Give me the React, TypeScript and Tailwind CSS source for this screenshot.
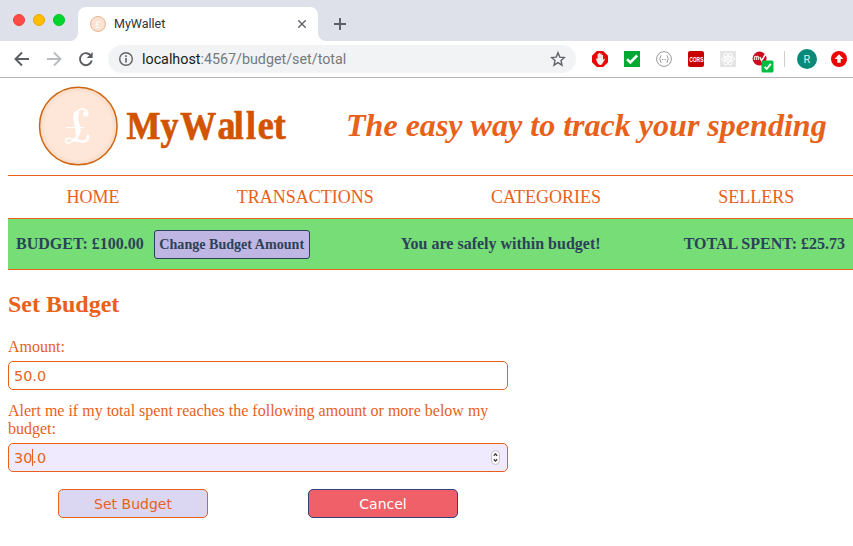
import type { ReactNode } from "react";

const NAV = ["HOME", "TRANSACTIONS", "CATEGORIES", "SELLERS"];

function Dot({ className }: { className: string }) {
  return <span className={`size-3 rounded-full border ${className}`} />;
}

function Icon({ children, className = "" }: { children: ReactNode; className?: string }) {
  return (
    <svg viewBox="0 0 16 16" className={`size-4 shrink-0 ${className}`} fill="none">
      {children}
    </svg>
  );
}

function TabStrip() {
  return (
    <div className="flex h-[41px] bg-[#dee1e9]">
      <div className="flex w-[78px] gap-2 rounded-br-lg pt-[14px] pl-[13px]">
        <Dot className="border-[#e9423a] bg-[#ff4b47]" />
        <Dot className="border-[#eeaa00] bg-[#ffbd04]" />
        <Dot className="border-[#00c222] bg-[#00d52c]" />
      </div>
      <div className="relative mt-[7px] flex h-[34px] w-[240px] items-center rounded-t-lg bg-white pr-3 pl-3">
        <svg viewBox="0 0 8 8" className="absolute bottom-0 -left-2 size-2">
          <path d="M8 0V8H0A8 8 0 0 0 8 0Z" fill="#fff" />
        </svg>
        <svg viewBox="0 0 8 8" className="absolute -right-2 bottom-0 size-2">
          <path d="M0 0V8H8A8 8 0 0 1 0 0Z" fill="#fff" />
        </svg>
        <span className="flex size-4 items-center justify-center rounded-full border border-[#e9b48b] bg-[#fbe3d4] font-['Liberation_Serif',serif] text-[11px] leading-none text-white">
          £
        </span>
        <span className="ml-2 flex-1 text-[12.5px] leading-4 text-[#303236]">MyWallet</span>
        <svg viewBox="0 0 8 8" className="size-2" fill="none" stroke="#5f6368" strokeWidth="1.4">
          <path d="M.3 .3 7.7 7.7M7.7 .3 .3 7.7" />
        </svg>
      </div>
      <svg viewBox="0 0 12 12" className="mt-[18px] ml-4 size-3" fill="none" stroke="#5a5d63" strokeWidth="1.9">
        <path d="M6 0V12M0 6H12" />
      </svg>
    </div>
  );
}

function Toolbar() {
  return (
    <div className="flex h-[37px] items-center border-b border-[#b5b5b5] bg-white pl-[14px]">
      <Icon>
        <path d="M15 8H2M8 1.5 1.5 8 8 14.5" stroke="#5a5d62" strokeWidth="1.9" />
      </Icon>
      <Icon className="ml-4">
        <path d="M1 8H14M8 1.5 14.5 8 8 14.5" stroke="#b9bbbe" strokeWidth="1.9" />
      </Icon>
      <Icon className="ml-4">
        <path d="M13.2 5.2A6 6 0 1 0 13.8 9.6" stroke="#5a5d62" strokeWidth="1.9" />
        <path d="M14.7 1V7H8.7Z" fill="#5a5d62" />
      </Icon>
      <div className="ml-[14px] flex h-7 w-[468px] items-center rounded-full bg-[#f1f3f4] pr-[10px] pl-[10px]">
        <Icon>
          <circle cx="8" cy="8" r="6.3" stroke="#5f6368" strokeWidth="1.4" />
          <path d="M8 7V11.5M8 4.3V6" stroke="#5f6368" strokeWidth="1.6" />
        </Icon>
        <span className="ml-2 flex-1 text-[14.3px] leading-5 text-[#18191b]">
          localhost<span className="text-[#757a7f]">:4567/budget/set/total</span>
        </span>
        <Icon>
          <path
            d="M8 1.7 9.8 6.1 14.5 6.5 11 9.6 12 14.2 8 11.7 4 14.2 5 9.6 1.5 6.5 6.2 6.1Z"
            stroke="#5f6368"
            strokeWidth="1.4"
          />
        </Icon>
      </div>
      <Icon className="ml-4">
        <path d="M4.8 0H11.2L16 4.8V11.2L11.2 16H4.8L0 11.2V4.8Z" fill="#e80808" />
        <path
          d="M4 8 5 7.2 5.6 8.3V3.2Q6.2 2.4 6.8 3.2V2.3Q7.5 1.4 8.2 2.3V3Q9 2.2 9.6 3V4Q10.4 3.4 11 4.3V9L12 7.7 13 8.3 10.4 12.5Q9.8 14 8.2 14 6.3 14 5.2 11.6Z"
          fill="#f4eeee"
        />
        <path d="M6.8 3.5V7M8.2 3V7M9.6 3.8V7" stroke="#d9b8b8" strokeWidth=".4" />
      </Icon>
      <Icon className="ml-4">
        <path d="M0 0H16V16H0Z" fill="#00aa32" />
        <path d="M3 8.2 6.3 11.5 13.2 4.5" stroke="#fff" strokeWidth="2.5" />
      </Icon>
      <Icon className="ml-4">
        <circle cx="8" cy="8" r="7.4" stroke="#999" />
        <path
          d="M5.5 4.6Q4.3 4.6 4.5 6T3.3 8Q4.7 8.2 4.5 10T5.5 11.4M10.5 4.6Q11.7 4.6 11.5 6T12.7 8Q11.3 8.2 11.5 10T10.5 11.4M6 8.5H7M7.6 8.5H8.5M9.2 8.5H10"
          stroke="#999"
          strokeWidth=".9"
        />
      </Icon>
      <Icon className="ml-4">
        <rect width="16" height="16" rx="2" fill="#c80000" />
        <text
          transform="translate(1.2 10.8) scale(.62 1)"
          fill="#fff"
          className="font-['Liberation_Sans',sans-serif] text-[8px] font-bold"
        >
          CORS
        </text>
      </Icon>
      <Icon className="ml-4">
        <path d="M0 0H16V16H0Z" fill="#e5e5e5" />
        <g stroke="#fff" strokeWidth=".9">
          <ellipse cx="8" cy="8" rx="6.5" ry="2.6" />
          <ellipse cx="8" cy="8" rx="6.5" ry="2.6" transform="rotate(60 8 8)" />
          <ellipse cx="8" cy="8" rx="6.5" ry="2.6" transform="rotate(120 8 8)" />
        </g>
        <circle cx="8" cy="8" r="1.4" fill="#fff" />
      </Icon>
      <svg viewBox="0 0 22 22" className="mt-[6px] ml-4 size-[22px] shrink-0" fill="none">
        <circle cx="7.6" cy="7.6" r="7" fill="#cf0a20" />
        <path d="M2.5 9V5.8Q4 4.6 4.4 6V9M4.4 6.2Q6 4.6 6.4 6V9" stroke="#f5d5d8" strokeWidth="1.2" />
        <path d="M7.8 6.2 9.6 9.6 13.6 3" stroke="#fff" strokeWidth="1.5" />
        <rect x="9.5" y="9.5" width="12" height="12" rx="1.5" fill="#00bd42" />
        <path d="M12.5 15.8 14.7 18 18.8 12.9" stroke="#fff" strokeWidth="1.8" />
      </svg>
      <span className="ml-[10px] h-4 w-px bg-[#cfcfcf]" />
      <span className="ml-3 flex size-5 items-center justify-center rounded-full bg-[#078b78] text-[11px] leading-none text-[#d9f0ec]">
        R
      </span>
      <Icon className="ml-[14px]">
        <circle cx="8" cy="8" r="8" fill="#ee0303" />
        <path d="M8 3.2 12.4 8H9.7V11.8H6.3V8H3.6Z" fill="#fff" />
      </Icon>
    </div>
  );
}

function Logo() {
  return (
    <svg viewBox="0 0 256 82" className="h-[82px] w-[256px]" role="img" aria-label="MyWallet">
      <defs>
        <radialGradient id="coin">
          <stop offset="0.86" stopColor="#fee6d8" />
          <stop offset="1" stopColor="#f8d9c6" />
        </radialGradient>
      </defs>
      <circle cx="40.3" cy="41" r="38.8" fill="url(#coin)" stroke="#cf650f" strokeWidth="1.5" />
      <g fill="none" stroke="#fff" strokeLinecap="round">
        <path d="M49.5 28C48 22.5 39.5 22.5 37.5 30" strokeWidth="1.7" />
        <path d="M38.5 28.5C35.5 35 41.5 42 39.8 48" strokeWidth="5" />
        <path d="M40.5 48C39.5 52 37.5 54.5 35.5 56" strokeWidth="2.4" />
        <path d="M28.3 42.5H45" strokeWidth="1" />
        <path d="M36 55C31 51.5 26.5 54 28 57C30 60 35 56 36 54" strokeWidth="1.6" />
        <path d="M36.5 55C41 55 43 57.5 46 56.5C49 55.5 50.5 53 50 51" strokeWidth="2.8" />
      </g>
      <circle cx="47.8" cy="29" r="2.8" fill="#fff" />
      <text
        transform="translate(0 54) scale(.9 1)"
        x="98.3 136 158 199.4 217.5 231 244.3 262"
        y="0"
        fill="#d35400"
        stroke="#d35400"
        strokeWidth=".7"
        className="font-['Liberation_Serif',serif] text-[40px] font-bold"
      >
        MyWallet
      </text>
    </svg>
  );
}

export default function App() {
  return (
    <div className="h-[546px] w-[853px] overflow-hidden bg-white font-['Roboto',sans-serif]">
      <TabStrip />
      <Toolbar />
      <main className="pl-2 font-['Liberation_Serif',serif] text-[#e8611b]">
        <header className="flex h-[97px] items-center pb-[2px] pl-[30px]">
          <Logo />
          <h1 className="ml-[52px] pb-[2px] text-[32.05px] leading-9 font-bold whitespace-nowrap italic">
            The easy way to track your spending
          </h1>
        </header>
        <nav className="flex h-11 items-center justify-around border-y border-[#e8611b] text-[18px] leading-5">
          {NAV.map((item) => (
            <a key={item}>{item}</a>
          ))}
        </nav>
        <section className="flex h-[51px] items-center justify-between border-b border-[#e8611b] bg-[#77dd77] px-2 text-base font-bold text-[#2c4258]">
          <div className="flex items-center">
            <span>BUDGET: £100.00</span>
            <button className="mr-2 ml-[10px] h-[29px] w-[156px] rounded-[3px] border border-[#2c4258] bg-[#c0b6e3] text-[14.08px] leading-none whitespace-nowrap">
              Change Budget Amount
            </button>
          </div>
          <span>You are safely within budget!</span>
          <span>TOTAL SPENT: £25.73</span>
        </section>
        <h2 className="mt-5 text-2xl leading-7 font-bold">Set Budget</h2>
        <form className="mt-5 w-[500px]">
          <label className="block text-base leading-[18px]">Amount:</label>
          <div className="mt-[5px] flex h-[29px] items-center rounded-[5px] border border-[#e8611b] px-[5px] pt-[2px] font-['DejaVu_Sans',sans-serif] text-[14.4px]">
            50.0
          </div>
          <label className="mt-3 block text-base leading-[18px]">
            Alert me if my total spent reaches the following amount or more below my budget:
          </label>
          <div className="mt-[5px] flex h-[29px] items-center rounded-[5px] border border-[#e8611b] bg-[#f0eafe] px-[5px] font-['DejaVu_Sans',sans-serif] text-[14.4px]">
            <span className="pt-[2px]">30</span>
            <span className="-mr-px h-[17px] w-px bg-[#e8611b]" />
            <span className="flex-1 pt-[2px]">.0</span>
            <svg viewBox="0 0 9 15" className="mr-[2px] h-[15px] w-[9px]" fill="none">
              <rect x=".5" y=".5" width="8" height="14" rx="4" fill="#fff" stroke="#c3c0ca" />
              <path d="M2.8 5.8 4.5 3.9 6.2 5.8M2.8 9.2 4.5 11.1 6.2 9.2" stroke="#333" strokeWidth="1.3" />
            </svg>
          </div>
          <div className="mt-[17px] flex justify-around font-['DejaVu_Sans',sans-serif] text-[14px]">
            <button className="h-[29px] w-[150px] rounded-[5px] border border-[#e8611b] bg-[#dbd7f2] pt-[2px]">
              Set Budget
            </button>
            <button className="h-[29px] w-[150px] rounded-[5px] border border-[#34427a] bg-[#f06068] pt-[2px] text-white">
              Cancel
            </button>
          </div>
        </form>
      </main>
    </div>
  );
}
